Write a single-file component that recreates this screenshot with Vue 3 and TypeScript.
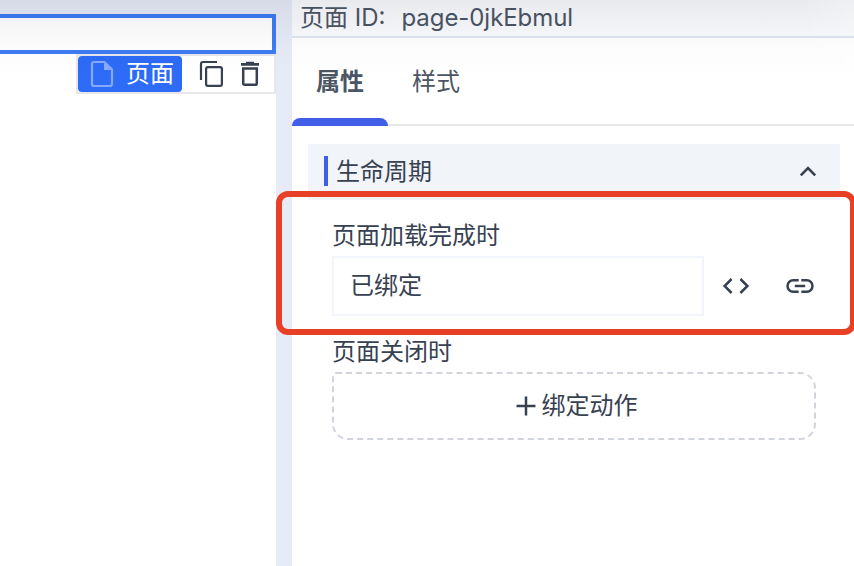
<script setup lang="ts">
import { ref } from 'vue'

type Tab = { key: string; label: string }

const tabs: Tab[] = [
  { key: 'props', label: '属性' },
  { key: 'style', label: '样式' },
]
const activeTab = ref('props')
const pageId = 'page-0jkEbmul'
</script>

<template>
  <div class="editor">
    <section class="canvas">
      <div class="selection"></div>
      <div class="sheet">
        <div class="toolbar">
          <div class="node-label">
            <svg class="page-icon" viewBox="0 0 24 28">
              <path d="M4 2H14.5L22 9.5V24Q22 26 20 26H4Q2 26 2 24V4Q2 2 4 2Z" fill="none" stroke="currentColor" stroke-width="2.2" />
              <path d="M14 1.5V10H22.5Z" fill="currentColor" />
            </svg>
            <span>页面</span>
          </div>
          <svg class="copy-icon" viewBox="0 0 26 28">
            <path d="M2 20V4Q2 2 4 2H18" fill="none" stroke="currentColor" stroke-width="2.2" />
            <rect x="7.1" y="7.1" width="15.8" height="18.8" rx="1.8" fill="none" stroke="currentColor" stroke-width="2.2" />
          </svg>
          <svg class="trash-icon" viewBox="0 0 20 26">
            <path d="M1 3.4H19M6 2H14" fill="none" stroke="currentColor" stroke-width="2.6" />
            <path d="M3.2 7.6H16.8V22.2Q16.8 23.8 15.2 23.8H4.8Q3.2 23.8 3.2 22.2Z" fill="none" stroke="currentColor" stroke-width="2.5" />
          </svg>
        </div>
      </div>
    </section>

    <aside class="panel">
      <header class="page-id"><span>页面 ID:</span><span class="id-value">{{ pageId }}</span></header>
      <nav class="tabs">
        <button
          v-for="tab in tabs"
          :key="tab.key"
          class="tab"
          :class="{ active: tab.key === activeTab }"
          @click="activeTab = tab.key"
        >{{ tab.label }}</button>
      </nav>
      <div class="content">
        <div class="group-title">
          <i class="marker"></i>
          <span>生命周期</span>
          <svg class="chevron" viewBox="0 0 18 12"><path d="M1.8 9.4 9 2.2 16.2 9.4" fill="none" stroke="currentColor" stroke-width="2.6" /></svg>
        </div>
        <div class="events">
          <div class="label first">页面加载完成时</div>
          <div class="bound-row">
            <div class="bound">已绑定</div>
            <svg class="code-icon" viewBox="0 0 28 18"><path d="M9.6 2 2.6 9 9.6 16M18.4 2 25.4 9 18.4 16" fill="none" stroke="currentColor" stroke-width="2.5" /></svg>
            <svg class="link-icon" viewBox="0 0 28 16"><path d="M12.7 2.3H7.2A5.7 5.7 0 0 0 7.2 13.7H12.7M15.3 2.3H20.8A5.7 5.7 0 0 1 20.8 13.7H15.3M8.8 8H19.2" fill="none" stroke="currentColor" stroke-width="2.5" /></svg>
          </div>
          <div class="label second">页面关闭时</div>
          <button class="bind">
            <svg class="plus" viewBox="0 0 20 20"><path d="M10 .5V19.5M.5 10H19.5" fill="none" stroke="currentColor" stroke-width="2.5" /></svg>
            <span>绑定动作</span>
          </button>
        </div>
      </div>
    </aside>

    <div class="top-shade"></div>
    <div class="highlight"></div>
  </div>
</template>

<style>
body {
  margin: 0;
  overflow: hidden;
}
</style>

<style scoped>
* {
  box-sizing: border-box;
}
.editor {
  position: relative;
  display: flex;
  gap: 16px;
  width: 854px;
  height: 566px;
  overflow: hidden;
  background: #e7ebf7;
  color: #374151;
  font-family: Inter, "Noto Sans CJK SC", sans-serif;
  font-size: 24px;
  line-height: 36px;
}
svg {
  display: block;
  flex: none;
}
button {
  border: 0;
  padding: 0;
  background: none;
  color: inherit;
  font: inherit;
}
.canvas {
  display: flex;
  flex-direction: column;
  width: 276px;
  padding-top: 14px;
}
.selection {
  height: 40px;
  border: 4px solid #3e7bf2;
  border-left: 0;
  background: #fff;
}
.sheet {
  flex: 1;
  display: flex;
  align-items: flex-start;
  justify-content: flex-end;
  background: #fff;
}
.toolbar {
  display: flex;
  align-items: center;
  width: 200px;
  height: 40px;
  border: 2px solid #e5e7eb;
}
.node-label {
  display: flex;
  align-items: center;
  gap: 12px;
  width: 104px;
  height: 36px;
  padding-left: 12px;
  border-radius: 4px;
  background: #2e6bf6;
  color: #fff;
}
.page-icon {
  width: 24px;
  height: 28px;
  color: #86a9fc;
}
.copy-icon {
  width: 26px;
  height: 28px;
  margin-left: 17px;
}
.trash-icon {
  width: 20px;
  height: 26px;
  margin-left: 15px;
}
.panel {
  flex: 1;
  background: #fff;
}
.page-id {
  display: flex;
  gap: 16px;
  height: 38px;
  padding-left: 8px;
  border-bottom: 2px solid #dfe5ee;
  background: #fafbfd;
  color: #4b5563;
}
.id-value {
  letter-spacing: -0.06px;
}
.tabs {
  display: flex;
  height: 88px;
  border-bottom: 2px solid #e5e7eb;
}
.tab {
  position: relative;
  width: 96px;
  height: 88px;
  color: #4b5563;
}
.tab.active {
  font-weight: 700;
}
.tab.active::after {
  content: "";
  position: absolute;
  inset: auto 0 0;
  height: 8px;
  border-radius: 8px 8px 0 0;
  background: #405ee8;
}
.content {
  padding: 18px 14px 0 16px;
}
.group-title {
  display: flex;
  align-items: center;
  gap: 8px;
  height: 56px;
  padding: 0 23px 0 16px;
  background: #f1f5fa;
}
.marker {
  width: 4px;
  height: 30px;
  margin-top: -2px;
  background: #405ee8;
}
.chevron {
  width: 18px;
  height: 12px;
  margin-left: auto;
}
.events {
  padding: 18px 24px 0;
}
.label {
  height: 38px;
}
.label.second {
  margin-top: 18px;
}
.bound-row {
  display: flex;
  align-items: center;
  height: 60px;
}
.bound {
  width: 372px;
  height: 60px;
  padding-left: 16px;
  border: 2px solid #f1f4fa;
  line-height: 56px;
}
.code-icon {
  width: 28px;
  height: 18px;
  margin-left: 18px;
}
.link-icon {
  width: 28px;
  height: 16px;
  margin-left: 36px;
}
.bind {
  display: flex;
  align-items: center;
  justify-content: center;
  gap: 6px;
  width: 484px;
  height: 68px;
  padding-left: 5px;
  border: 2px dashed #d1d5db;
  border-radius: 4px 16px 16px 16px;
}
.plus {
  width: 20px;
  height: 20px;
}
.top-shade {
  position: absolute;
  inset: 0 0 auto;
  height: 76px;
  background: linear-gradient(rgba(15, 20, 45, 0.072), rgba(15, 20, 45, 0.044) 30%, rgba(15, 20, 45, 0.015) 58%, transparent);
  mask-image: linear-gradient(to right, #000 94%, rgba(0, 0, 0, 0.7));
  pointer-events: none;
}
.highlight {
  position: absolute;
  left: 276px;
  top: 191px;
  width: 580px;
  height: 144px;
  border: 6px solid #e84026;
  border-radius: 12px;
  pointer-events: none;
}
</style>
